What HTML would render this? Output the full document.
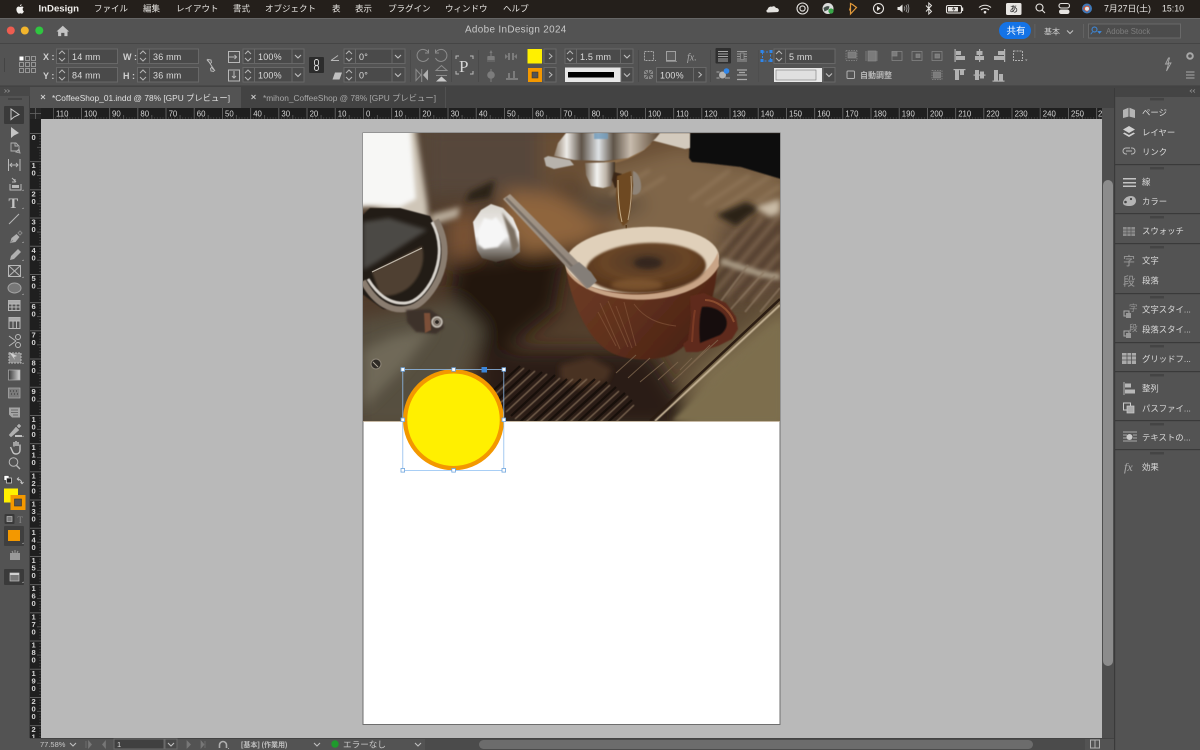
<!DOCTYPE html>
<html lang="ja"><head><meta charset="utf-8"><title>Adobe InDesign 2024</title>
<style>
html,body{margin:0;padding:0;background:#535353;width:1200px;height:750px;overflow:hidden}
svg{display:block;position:absolute;left:0;top:0}
text{font-family:"Liberation Sans","Noto Sans CJK JP",sans-serif}
.m{font-size:8.5px;fill:#e6e4e1}
.f{font-size:9px;fill:#dcdcdc;letter-spacing:.2px}
.l{font-size:9px;fill:#cfcfcf;font-weight:bold}
.p{font-size:8.4px;fill:#d8d8d8}
.r{font-size:7.8px;fill:#d4d4d4}
.v{font-size:7.6px;fill:#d6d6d6;font-weight:bold}
.box{fill:#4a4a4a;stroke:#686868;stroke-width:1}
.i{fill:none;stroke:#b8b8b8;stroke-width:1}
.d{fill:none;stroke:#8c8c8c;stroke-width:1}
.s{fill:#b8b8b8}
.g{fill:#8a8a8a}
.w{fill:none;stroke:#e6e4e1;stroke-width:1.1}
</style></head><body>
<svg width="1200" height="750" viewBox="0 0 1200 750" xmlns="http://www.w3.org/2000/svg">
<defs>
<symbol id="spin" viewBox="0 0 12 16" overflow="visible"><path d="M3 6l3-3 3 3M3 10l3 3 3-3" fill="none" stroke="#b5b5b5" stroke-width="1"/></symbol>
<symbol id="chev" viewBox="0 0 8 6" overflow="visible"><path d="M1 1.5l3 3 3-3" fill="none" stroke="#c0c0c0" stroke-width="1.1"/></symbol>
<pattern id="tx" patternUnits="userSpaceOnUse" x="363" y="108" width="28.2" height="11">
<rect width="28.2" height="11" fill="#1f1f1f"/><rect x="0" y="0" width=".8" height="11" fill="#6e6e6e"/><rect x="14.1" y="7" width=".7" height="4" fill="#666"/>
<rect x="2.8" y="9" width=".5" height="2" fill="#555"/><rect x="5.6" y="9" width=".5" height="2" fill="#555"/><rect x="8.5" y="9" width=".5" height="2" fill="#555"/><rect x="11.3" y="9" width=".5" height="2" fill="#555"/><rect x="16.9" y="9" width=".5" height="2" fill="#555"/><rect x="19.7" y="9" width=".5" height="2" fill="#555"/><rect x="22.6" y="9" width=".5" height="2" fill="#555"/><rect x="25.4" y="9" width=".5" height="2" fill="#555"/>
</pattern>
<pattern id="ty" patternUnits="userSpaceOnUse" x="30" y="133" width="11" height="28.2">
<rect width="11" height="28.2" fill="#1f1f1f"/><rect x="0" y="0" width="11" height=".8" fill="#6e6e6e"/><rect x="7" y="14.1" width="4" height=".7" fill="#666"/>
<rect x="9" y="2.8" width="2" height=".5" fill="#555"/><rect x="9" y="5.6" width="2" height=".5" fill="#555"/><rect x="9" y="8.5" width="2" height=".5" fill="#555"/><rect x="9" y="11.3" width="2" height=".5" fill="#555"/><rect x="9" y="16.9" width="2" height=".5" fill="#555"/><rect x="9" y="19.7" width="2" height=".5" fill="#555"/><rect x="9" y="22.6" width="2" height=".5" fill="#555"/><rect x="9" y="25.4" width="2" height=".5" fill="#555"/>
</pattern>
<clipPath id="ph"><rect x="363" y="133" width="417" height="288.5"/></clipPath>
<filter id="b8" x="-40%" y="-40%" width="180%" height="180%"><feGaussianBlur stdDeviation="9"/></filter>
<filter id="b6" x="-30%" y="-30%" width="160%" height="160%"><feGaussianBlur stdDeviation="6"/></filter>
<filter id="b3" x="-30%" y="-30%" width="160%" height="160%"><feGaussianBlur stdDeviation="3"/></filter>
<filter id="b2" x="-30%" y="-30%" width="160%" height="160%"><feGaussianBlur stdDeviation="2"/></filter>
<filter id="b1" x="-20%" y="-20%" width="140%" height="140%"><feGaussianBlur stdDeviation="1"/></filter>
<filter id="b05" x="-20%" y="-20%" width="140%" height="140%"><feGaussianBlur stdDeviation=".6"/></filter>
<linearGradient id="bg1" x1="0" y1="0" x2="1" y2="1"><stop offset="0" stop-color="#584838"/><stop offset=".45" stop-color="#4a3424"/><stop offset="1" stop-color="#6a5a40"/></linearGradient>
<radialGradient id="cof" cx=".5" cy=".35" r=".7"><stop offset="0" stop-color="#4f3826"/><stop offset=".5" stop-color="#694526"/><stop offset="1" stop-color="#4a2a14"/></radialGradient>
<linearGradient id="cup" x1="0" y1="0" x2="1" y2=".6"><stop offset="0" stop-color="#6e3e26"/><stop offset=".5" stop-color="#62321e"/><stop offset="1" stop-color="#4a2214"/></linearGradient>
<linearGradient id="chr" x1="0" y1="0" x2="1" y2="0"><stop offset="0" stop-color="#8c7c6a"/><stop offset=".12" stop-color="#eeece8"/><stop offset=".26" stop-color="#5e5348"/><stop offset=".42" stop-color="#dfe3e6"/><stop offset=".56" stop-color="#5f5448"/><stop offset=".72" stop-color="#c8bcae"/><stop offset="1" stop-color="#5a4632"/></linearGradient>
<linearGradient id="chs" x1="0" y1="0" x2="1" y2="0"><stop offset="0" stop-color="#7a6a58"/><stop offset=".4" stop-color="#f2f2f0"/><stop offset=".7" stop-color="#bdb4a8"/><stop offset="1" stop-color="#3c2c20"/></linearGradient>
<linearGradient id="wand" x1="0" y1="0" x2="1" y2="1"><stop offset="0" stop-color="#a89a8a"/><stop offset="1" stop-color="#8a8078"/></linearGradient>
<linearGradient id="knob" x1="0" y1="0" x2="0" y2="1"><stop offset="0" stop-color="#d8d4cc"/><stop offset=".55" stop-color="#f4f4f4"/><stop offset=".78" stop-color="#8f8a84"/><stop offset="1" stop-color="#4a4036"/></linearGradient>
</defs>

<!-- menu bar -->
<rect x="0" y="0" width="1200" height="18" fill="#241f1b"/>
<path d="M21.6 4.2c-.9.1-1.7.8-1.6 1.9.9 0 1.7-.9 1.6-1.9zM22.7 8.9c0-1 .8-1.4.9-1.5-.6-.8-1.4-.9-1.7-.9-.7 0-1.3.4-1.7.4s-.9-.4-1.5-.4c-.8 0-1.5.5-1.9 1.2-.8 1.4-.2 3.6.6 4.7.4.6.9 1.2 1.5 1.2.6 0 .8-.4 1.5-.4s.9.4 1.5.4c.6 0 1-.6 1.4-1.1.4-.6.6-1.2.6-1.2s-1.2-.5-1.2-2z" fill="#f2f0ee"/>
<text x="38.5" y="11.5" font-size="9.6" font-weight="bold" fill="#f0eeeb">InDesign</text>
<text x="94" y="11.5" class="m">ファイル</text>
<text x="143" y="11.5" class="m">編集</text>
<text x="176" y="11.5" class="m">レイアウト</text>
<text x="233" y="11.5" class="m">書式</text>
<text x="265" y="11.5" class="m">オブジェクト</text>
<text x="332" y="11.5" class="m">表</text>
<text x="355" y="11.5" class="m">表示</text>
<text x="388" y="11.5" class="m">プラグイン</text>
<text x="445" y="11.5" class="m">ウィンドウ</text>
<text x="503" y="11.5" class="m">ヘルプ</text>
<!-- status icons -->
<path d="M768 12.5c-1.8 0-2.2-2.6-.4-3 .3-2 2.4-3.4 4.4-2.6 1-1.2 3.4-.8 3.8 1 2.4 0 3.4 1.8 3 3-.3.7-.8 1.1-1.6 1.2z" fill="#e4e2df"/>
<circle cx="802.5" cy="8.5" r="5.5" class="w"/><circle cx="802.5" cy="8.5" r="2.6" class="w"/>
<circle cx="828" cy="8.5" r="5.5" fill="#dcdcdc"/><path d="M823.5 8c2-1.5 4-2.5 6-1.5l-1 3-4 2z" fill="#44504a"/><circle cx="831" cy="11" r="2.6" fill="#3aa84a"/>
<path d="M850.5 3.5v10.5l6-6.5-4-3zM850.5 7l-1 3.5" fill="none" stroke="#e39a3a" stroke-width="1.2"/>
<circle cx="878.5" cy="8.5" r="5" class="w"/><path d="M877 6v5l3.6-2.500z" fill="#e6e4e1"/>
<path d="M897.5 7h2l3-2.500v8l-3-2.500h-2z" fill="#e6e4e1"/><path d="M904.3 6.500c.7 1.300.7 2.700 0 4M906 5c1.200 2.200 1.200 4.800 0 7M907.800 4c1.400 2.800 1.400 6 0 9" fill="none" stroke="#aaa" stroke-width=".8"/>
<path d="M926 5.500l5.500 6-2.700 2.500v-11l2.700 2.500-5.500 6" fill="none" stroke="#e6e4e1" stroke-width="1"/>
<rect x="946.500" y="5.500" width="15" height="7.500" rx="1.500" class="w"/><rect x="948" y="7" width="10" height="4.500" fill="#e6e4e1"/><path d="M954 6l-2 3.500h2l-1.500 3 3-4h-2z" fill="#241f1b"/><rect x="962" y="7.500" width="1.200" height="3.500" fill="#e6e4e1"/>
<path d="M979 7.500c3.500-3 8.500-3 12 0M981 10c2.200-2 5.800-2 8 0" class="w"/><circle cx="985" cy="12.200" r="1.300" fill="#e6e4e1"/>
<rect x="1006" y="3" width="15.500" height="12" rx="1.500" fill="#e8e6e3"/><text x="1009.500" y="12.200" font-size="8.500" fill="#222">あ</text>
<circle cx="1039.500" cy="7.500" r="3.500" class="w"/><path d="M1042 10l3 3" class="w"/>
<rect x="1059" y="3.500" width="10.500" height="4.500" rx="2.200" class="w"/><rect x="1059" y="9.500" width="10.500" height="4.500" rx="2.200" fill="#e6e4e1"/>
<circle cx="1087" cy="8.500" r="5" fill="#3f78b8"/><path d="M1083 9c1-3 4-4 6-3l1 3-3 3z" fill="#d0583a"/><circle cx="1087" cy="8.800" r="2" fill="#dfe6ee"/>
<text x="1104" y="11.500" font-size="8.800" fill="#e6e4e1">7月27日(土)</text>
<text x="1162" y="11.500" font-size="8.800" fill="#e6e4e1">15:10</text>

<!-- title bar -->
<rect x="0" y="18" width="1200" height="25" fill="#535353"/>
<rect x="0" y="18" width="1200" height=".8" fill="#6a6a6a"/>
<circle cx="10.800" cy="30.500" r="4" fill="#ee5d50"/><circle cx="24.800" cy="30.500" r="4" fill="#f3b52c"/><circle cx="39.300" cy="30.500" r="4" fill="#2fc640"/>
<path d="M56.500 31.500l6.300-5.800 6.300 5.800h-1.600v4.600h-3.100v-3.200h-3.200v3.200h-3.100v-4.600z" fill="#c4c4c4"/>
<text x="465" y="32.500" font-size="9.900" fill="#c8c8c8" letter-spacing=".35">Adobe InDesign 2024</text>
<rect x="999" y="22" width="32" height="17" rx="8.500" fill="#1473e6"/><text x="1006.500" y="34" font-size="9.500" fill="#fff">共有</text>
<rect x="1034.500" y="24" width=".8" height="14" fill="#666"/>
<text x="1044" y="34.500" font-size="8" fill="#cfcfcf">基本</text><use href="#chev" x="1066" y="29" width="8" height="6"/>
<rect x="1083" y="24" width=".8" height="14" fill="#666"/>
<rect x="1088.500" y="24" width="92" height="14" fill="#4c4c4c" stroke="#696969"/>
<circle cx="1094.500" cy="29.500" r="2.500" fill="none" stroke="#3d8be0" stroke-width="1"/><path d="M1092.500 32l-1.800 2.200M1098 31.500l3 0-1.500 1.800z" stroke="#3d8be0" fill="#3d8be0" stroke-width=".8"/>
<text x="1106" y="33.800" font-size="7.800" fill="#7d7d7d">Adobe Stock</text>

<!-- control bar -->
<rect x="0" y="43" width="1200" height="1" fill="#454545"/>
<rect x="0" y="44" width="1200" height="42" fill="#535353"/>
<rect x="0" y="85.500" width="1200" height="1" fill="#3f3f3f"/>
<rect x="4" y="58" width="1" height="14" fill="#444"/>
<!-- ref point -->
<g fill="none" stroke="#a8a8a8" stroke-width=".8"><rect x="25.500" y="56.500" width="4" height="4"/><rect x="31.500" y="56.500" width="4" height="4"/><rect x="19.500" y="62.500" width="4" height="4"/><rect x="25.500" y="62.500" width="4" height="4"/><rect x="31.500" y="62.500" width="4" height="4"/><rect x="19.500" y="68.500" width="4" height="4"/><rect x="25.500" y="68.500" width="4" height="4"/><rect x="31.500" y="68.500" width="4" height="4"/></g>
<rect x="19.500" y="56.500" width="4" height="4" fill="#fff"/>
<text x="43" y="60" class="l">X :</text><text x="43" y="79" class="l">Y :</text>
<text x="123" y="60" class="l">W :</text><text x="123" y="79" class="l">H :</text>
<rect x="56.500" y="49" width="61" height="14.500" class="box"/><rect x="56.500" y="67.500" width="61" height="14.500" class="box"/>
<rect x="137.500" y="49" width="61" height="14.500" class="box"/><rect x="137.500" y="67.500" width="61" height="14.500" class="box"/>
<path d="M68.500 49v14.500M68.500 67.500v14.500M149.500 49v14.500M149.500 67.500v14.500" stroke="#686868"/>
<use href="#spin" x="56" y="48" width="12" height="16"/><use href="#spin" x="56" y="67" width="12" height="16"/><use href="#spin" x="137" y="48" width="12" height="16"/><use href="#spin" x="137" y="67" width="12" height="16"/>
<text x="72" y="60" class="f">14 mm</text><text x="72" y="78.500" class="f">84 mm</text><text x="153" y="60" class="f">36 mm</text><text x="153" y="78.500" class="f">36 mm</text>
<path d="M207 60l4 4m0 3l4 4M208 59.500l3 .5 .5 3M214 71.500l-3-.5-.5-3M207 59l8 12" class="i"/>
<!-- scale -->
<rect x="228.500" y="51.500" width="11" height="11" class="i"/><path d="M228.500 57h8m-2-2l2 2-2 2M239.500 53v8" class="i"/>
<rect x="228.500" y="70" width="11" height="11" class="i"/><path d="M234 71v7m-2-2l2 2 2-2" class="i"/>
<rect x="243" y="49" width="61" height="14.500" class="box"/><rect x="243" y="67.500" width="61" height="14.500" class="box"/>
<path d="M254.500 49v14.500M254.500 67.500v14.500M292 49v14.500M292 67.500v14.500" stroke="#686868"/>
<use href="#spin" x="242" y="48" width="12" height="16"/><use href="#spin" x="242" y="67" width="12" height="16"/>
<text x="258" y="60" class="f">100%</text><text x="258" y="78.500" class="f">100%</text>
<use href="#chev" x="294" y="53.500" width="8" height="6"/><use href="#chev" x="294" y="72" width="8" height="6"/>
<rect x="309" y="57" width="15" height="16" rx="1" fill="#2c2c2c"/><path d="M316.500 59.500a2 2 0 012 2v2a2 2 0 01-4 0v-2a2 2 0 012-2zM316.500 65.500a2 2 0 012 2v1a2 2 0 01-4 0v-1a2 2 0 012-2z" fill="none" stroke="#ddd" stroke-width=".9"/>
<!-- angle -->
<path d="M331 60.500h8M331 60.500l7-5" class="i"/><path d="M335 75.500h7l-2.500 7h-7z" transform="translate(0,-3)" fill="#c0c0c0"/>
<rect x="344" y="49" width="61" height="14.500" class="box"/><rect x="344" y="67.500" width="61" height="14.500" class="box"/>
<path d="M355.500 49v14.500M355.500 67.500v14.500M392 49v14.500M392 67.500v14.500" stroke="#686868"/>
<use href="#spin" x="343" y="48" width="12" height="16"/><use href="#spin" x="343" y="67" width="12" height="16"/>
<text x="359" y="60" class="f">0°</text><text x="359" y="78.500" class="f">0°</text>
<use href="#chev" x="394" y="53.500" width="8" height="6"/><use href="#chev" x="394" y="72" width="8" height="6"/>
<rect x="410" y="50" width=".8" height="32" fill="#484848"/>
<!-- rotate / flip -->
<path d="M428 52a6 6 0 10.500 6M428.500 49.500v3.500h-3.500" class="d"/><path d="M436 52a6 6 0 11-.5 6M435.500 49.500v3.500h3.500" class="d"/>
<path d="M416 69.500v11l5-5.500zM421.700 69v13" class="d"/><path d="M428 69.500v11l-5-5.500z" fill="#b0b0b0"/>
<path d="M436 71.500h11l-5.500-5z" class="d" transform="translate(0,-1)"/><path d="M436 75.500h11" stroke="#8c8c8c"/><path d="M436 81.500h11l-5.500-5z" fill="#c8c8c8"/>
<rect x="451" y="50" width=".8" height="32" fill="#484848"/>
<text x="459" y="72" font-size="17" fill="#d6d6d6" style='font-family:"Liberation Serif",serif'>P</text>
<path d="M456 59v-3h3M470 56h3v3M456 71v3h3M473 71v3h-3" class="i" stroke-width=".9"/>
<rect x="478" y="50" width=".8" height="32" fill="#484848"/>
<!-- text wrap-like greys -->
<g fill="#7c7c7c"><path d="M491 50l1.500 3h-1v3h3v4h-7v-4h3v-3h-1z"/><path d="M487 57h8v5h-8z" opacity=".4"/><path d="M505 54l3 2.500-3 2.500zM517 54l-3 2.500 3 2.500zM508 53h2v7h-2zM512 53h2v7h-2z"/><circle cx="491" cy="75" r="3.800"/><path d="M491 69v13" stroke="#7c7c7c"/><path d="M506 78h12v2h-12zM508 73h2v5h-2zM513 71h2v7h-2z"/></g>
<!-- swatches -->
<rect x="527.500" y="49" width="14.500" height="14.500" fill="#fff000"/>
<rect x="544" y="49" width="12" height="14.500" class="box"/><path d="M549 53.500l3 2.700-3 2.700" class="i"/>
<rect x="528" y="68" width="14" height="14" fill="#f39800"/><rect x="532" y="72" width="6" height="6" fill="#535353" stroke="#333" stroke-width=".5"/>
<rect x="544" y="67.500" width="12" height="14.500" class="box"/><path d="M549 72l3 2.700-3 2.700" class="i"/>
<!-- stroke -->
<rect x="565" y="49" width="68" height="14.500" class="box"/><path d="M576.500 49v14.500M620.500 49v14.500" stroke="#686868"/>
<use href="#spin" x="564" y="48" width="12" height="16"/><text x="580" y="60" class="f">1.5 mm</text><use href="#chev" x="623" y="53.500" width="8" height="6"/>
<rect x="565" y="67.500" width="55.500" height="14.500" fill="#e8e8e8"/><rect x="568" y="72" width="46" height="5.500" fill="#000"/>
<rect x="621" y="67.500" width="12" height="14.500" class="box"/><use href="#chev" x="623" y="72" width="8" height="6"/>
<rect x="638" y="50" width=".8" height="32" fill="#484848"/>
<!-- effects -->
<rect x="644.500" y="51.500" width="9" height="9" fill="none" stroke="#a8a8a8" stroke-dasharray="2 1"/><path d="M655 60.500h1" stroke="#a8a8a8"/>
<rect x="666.500" y="51.500" width="9" height="9" fill="#5d5d5d" stroke="#a0a0a0"/><path d="M666 61.500h11" stroke="#888"/>
<text x="687" y="60.500" font-size="10" font-style="italic" fill="#a8a8a8" style='font-family:"Liberation Serif",serif'>fx.</text>
<rect x="644" y="70" width="9" height="9" fill="#8a8a8a"/><path d="M644 70l9 9M653 70l-9 9M648.500 70v9M644 74.500h9" stroke="#555" stroke-width="1"/>
<rect x="656.500" y="67.500" width="49.500" height="14.500" class="box"/><path d="M693.500 67.500v14.500" stroke="#686868"/><text x="660" y="78.500" class="f">100%</text><path d="M698.500 72l3 2.700-3 2.700" class="i"/>
<rect x="710" y="50" width=".8" height="32" fill="#484848"/>
<!-- text wrap -->
<rect x="715.500" y="48" width="15.500" height="15.500" rx="1" fill="#2f2f2f"/>
<path d="M718 51.500h10M718 54h10M718 56.500h10M718 59h10M718 61h10" stroke="#cfcfcf" stroke-width=".8"/>
<path d="M737 51.500h10M737 61h10M737 54h3M744 54h3M737 56.500h3M744 56.500h3M737 59h3M744 59h3" stroke="#9a9a9a" stroke-width=".9"/><rect x="740.500" y="53" width="3.500" height="6.500" fill="none" stroke="#9a9a9a" stroke-width=".7"/>
<circle cx="722.500" cy="75" r="3.500" fill="#b4b4b4"/><circle cx="726.500" cy="71" r="2.800" fill="#2f86ea"/><path d="M716.500 72h3M716.500 78h3M725 78h5" stroke="#aaa"/>
<path d="M737 70h10M737 75h10M737 79.500h10M739 72.500h6" stroke="#a8a8a8" stroke-width="1.200"/>
<rect x="758" y="50" width=".8" height="32" fill="#484848" opacity=".5"/>
<!-- frame fit -->
<rect x="762.500" y="52" width="8" height="9" fill="none" stroke="#2f86ea" stroke-dasharray="2 1.500"/><g fill="#2f86ea"><rect x="760.500" y="50" width="3" height="3"/><rect x="769.500" y="50" width="3" height="3"/><rect x="760.500" y="59" width="3" height="3"/><rect x="769.500" y="59" width="3" height="3"/></g>
<rect x="774" y="49" width="61" height="14.500" class="box"/><path d="M785.500 49v14.500" stroke="#686868"/><use href="#spin" x="773" y="48" width="12" height="16"/><text x="789" y="60" class="f">5 mm</text>
<rect x="774" y="68" width="48" height="14" fill="#e8e8e8"/><rect x="776" y="70" width="40" height="10" fill="#e0e0e0" stroke="#777" stroke-width=".6"/>
<rect x="823" y="67.500" width="12" height="14.500" class="box"/><use href="#chev" x="825" y="72" width="8" height="6"/>
<!-- frame fitting -->
<g fill="#7b7b7b" stroke="#8a8a8a" stroke-width=".7">
<rect x="848" y="52" width="8" height="6"/><path d="M846 50.500h11M846 60.500h11M846 50.500v10M857 50.500v10" fill="none" stroke-dasharray="1.500 1"/>
<rect x="868" y="51" width="8" height="10"/><path d="M866 51v10M877 51v10" fill="none"/>
<rect x="892" y="51.500" width="10" height="9" fill="none"/><rect x="892" y="51.500" width="5" height="4.500"/>
<rect x="912" y="51.500" width="10" height="9" fill="none"/><rect x="916" y="54" width="4" height="3.500"/>
<rect x="932" y="51.500" width="10" height="9" fill="none"/><rect x="935" y="54" width="4.500" height="4"/>
<rect x="932" y="70.500" width="10" height="9" fill="none" stroke-dasharray="1.500 1"/><rect x="933.500" y="72" width="7" height="6"/>
</g>
<rect x="847" y="71" width="7.500" height="7.500" rx="1" fill="none" stroke="#b0b0b0"/>
<text x="860" y="78" font-size="8" fill="#b8b8b8" font-weight="bold">自動調整</text>
<!-- align -->
<g fill="#b2b2b2">
<rect x="954.500" y="49" width="1.200" height="13"/><rect x="956" y="51" width="5" height="4"/><rect x="956" y="56" width="9" height="4"/>
<rect x="979" y="49" width="1.200" height="13"/><rect x="976.500" y="51" width="6" height="4"/><rect x="975" y="56" width="9" height="4"/>
<rect x="1004" y="49" width="1.200" height="13"/><rect x="998" y="51" width="6" height="4"/><rect x="994" y="56" width="10" height="4"/>
<rect x="953.500" y="69" width="12" height="1.200"/><rect x="955" y="70" width="4" height="10"/><rect x="960" y="70" width="4" height="5"/>
<rect x="973.500" y="74.500" width="12" height="1.200"/><rect x="975" y="70" width="4" height="10"/><rect x="980" y="71.500" width="4" height="7"/>
<rect x="992.500" y="80.500" width="12" height="1.200"/><rect x="994" y="70" width="4" height="10.500"/><rect x="999" y="74" width="4" height="6.500"/>
</g>
<rect x="1013.500" y="51" width="9" height="9.500" fill="none" stroke="#b0b0b0" stroke-dasharray="2 1"/><path d="M1025 59.500h2.500l-1.200 1.500z" fill="#b0b0b0"/>
<path d="M1170 56l-3 6h3l-2 7 4.500-8h-3l1.500-5z" fill="none" stroke="#a8a8a8" stroke-width=".9" transform="translate(-1.500,2)"/>
<circle cx="1190" cy="56" r="2.800" fill="none" stroke="#a8a8a8" stroke-width="2"/>
<path d="M1186 72h8.500M1186 75h8.500M1186 78h8.500" stroke="#a8a8a8"/>

<!-- tab bar -->
<rect x="0" y="86" width="1200" height="22" fill="#434343"/>
<rect x="30" y="87" width="211" height="21" fill="#535353"/>
<rect x="445" y="87" width=".8" height="21" fill="#555"/>
<rect x="0" y="87" width="30" height="9" fill="#484848"/>
<path d="M4.500 89.500l2 1.500-2 1.500M7.500 89.500l2 1.500-2 1.500" fill="none" stroke="#999" stroke-width=".7"/>
<path d="M41 95l4 4M45 95l-4 4M251.500 95l4 4M255.500 95l-4 4" stroke="#d0d0d0" stroke-width=".9"/>
<text x="52" y="101" font-size="8.300" fill="#e0e0e0" textLength="178">*CoffeeShop_01.indd @ 78% [GPU プレビュー]</text>
<text x="263" y="101" font-size="8.300" fill="#a8a8a8" textLength="173">*mihon_CoffeeShop @ 78% [GPU プレビュー]</text>

<!-- canvas -->
<rect x="41" y="119" width="1061" height="619" fill="#b9b9b9"/>
<rect x="363" y="133" width="417" height="591.500" fill="#fff" stroke="#6e6e6e" stroke-width="1"/>

<!-- photo -->
<g clip-path="url(#ph)">
<rect x="363" y="133" width="417" height="289" fill="url(#bg1)"/>
<g filter="url(#b8)">
<rect x="425" y="125" width="130" height="70" fill="#56463a"/>
<path d="M540 125h160v40l-100 25-60-10z" fill="#6b4f36"/>
<path d="M590 175l90-25 110 20v60l-90 30-70-10-40-30z" fill="#80664a"/>
<path d="M505 190l70 5 50 25-40 25-60 10-25-30z" fill="#8f653c"/>
<path d="M560 195l60-5 30 15-50 20z" fill="#5a4a38"/>
<path d="M455 262l110-12-10 60-50 40-60 0z" fill="#241610"/>
<path d="M448 215l30-5 2 45-32 5z" fill="#7a5236"/>
<path d="M720 225l70-20v90l-70 10z" fill="#5e4a38"/>
<path d="M355 320l100-20 30 30-40 100h-90z" fill="#565040"/>
<path d="M480 350l170 0 50 80H470z" fill="#2a1c14"/>
<path d="M700 370l90-70v130h-110z" fill="#7f7050"/>
</g>
<path d="M560 365l30-8 22 12-5 12-25 8-22-10z" fill="#4a3022" filter="url(#b3)"/>
<path d="M363 350l30-14 40-8-30 40-30 30-10 10z" fill="#6f6958" filter="url(#b6)"/>
<path d="M495 180l-25 12-5 10 25-4z" fill="#2a2018" filter="url(#b3)"/>
<!-- white blown highlight -->
<path d="M355 125h60l12 78 2 20-18-1-22-10-18-6-16 2z" fill="#cfc6b8" filter="url(#b3)"/>
<path d="M355 125h55l6 74-16 8-20-2-25 0z" fill="#f7f7f5" filter="url(#b2)"/>
<path d="M430 215l30-8 -2 10-26 8z" fill="#b8ab9a" filter="url(#b3)"/>
<!-- right stripes blurred -->
<g stroke="#a3896c" stroke-width="3" opacity=".45" filter="url(#b2)" fill="none">
<path d="M690 285l60-70M702 290l60-72M714 293l66-78M726 297l54-62M740 300l40-46M752 302l28-32"/>
<path d="M705 205l45-30M720 210l50-34M736 216l44-30M690 200l40-30M610 195l40-25M625 202l40-25"/>
</g>
<g stroke="#3a2a1e" stroke-width="2" opacity=".4" filter="url(#b2)" fill="none">
<path d="M696 287l60-70M708 291l62-74M720 295l60-70M733 299l47-55M746 302l34-40"/>
</g>
<path d="M716 215l30-13 14 6-24 18z" fill="#2a2018" filter="url(#b3)"/>
<path d="M755 207l25-8v14l-10 4z" fill="#c9bba6" filter="url(#b3)"/>
<path d="M722 258l40 13 18 3v6l-20-3-40-13z" fill="#a89a84" filter="url(#b2)"/>
<g stroke="#8a7660" stroke-width="2" opacity=".7" filter="url(#b05)" fill="none"><path d="M718 305l30-40M730 310l34-38M745 312l30-36M760 312l20-24"/></g>
<!-- black top right -->
<path d="M690 133h91v46l-40-12-35-4-14-1-3-4z" fill="#100e0e" filter="url(#b05)"/>
<!-- group head -->
<path d="M650 133h40v15l-5 1-34-9z" fill="#d3cabd" filter="url(#b05)"/>
<path d="M650 143c-10 10-24 18-45 20" stroke="#8a6a46" stroke-width="3" fill="none" filter="url(#b05)"/>
<path d="M566 133l-8 10-4 13 20 4 30 1 24-3 16-8 12-12 4-5z" fill="url(#chr)" filter="url(#b05)"/>
<path d="M594 133h14v6h-14z" fill="#6f9bbd" filter="url(#b05)" opacity=".8"/>
<path d="M544 158l4-2 22 4 4 5-20 4-8-3z" fill="#b8b3ac" filter="url(#b05)"/>
<path d="M585 163l30-1 0 12-4 12-8 2-12-2-5-11z" fill="url(#chs)" filter="url(#b05)"/>
<path d="M614 172l8 2-2 12-5 2-3-8z" fill="#3a2818" filter="url(#b05)"/>
<!-- stream -->
<path d="M633 171c5 1 9 10 8 18-1 5-6 7-9 5l1-12z" fill="#8f8478" filter="url(#b05)"/>
<path d="M617 176l14-5 2 14-2 22-3 15-5 4-5-8-2-22z" fill="#6e4a24" filter="url(#b05)"/>
<path d="M618 180c0 14 1 30 4 42" stroke="#c8b08a" stroke-width="1" fill="none"/>
<path d="M631 176c1 14 0 30-3 44" stroke="#b8a080" stroke-width="1" fill="none"/>
<rect x="625.500" y="225" width="1.500" height="6" fill="#5a3a1a"/><circle cx="629" cy="237" r="2.800" fill="#7a3c1c" filter="url(#b05)"/>
<!-- knob -->
<path d="M473 222l8-12 10-6 12 4 10 10 6 14 1 20-8 6-16 4-14-4-5-8-2-14z" fill="url(#knob)" filter="url(#b05)"/>
<path d="M478 232l6-14 8 2 4-3 6 8 4 12-8 10-14 2-6-5z" fill="#f6f6f6" filter="url(#b1)"/>
<path d="M502 212l13 18 4 16-6 8-4-18z" fill="#7a6e60" filter="url(#b1)"/>
<!-- cup -->
<path d="M566 268c4 30 20 70 44 84 18 10 50 10 66 0 26-16 40-50 42-94z" fill="url(#cup)" filter="url(#b05)"/>
<g stroke="#84563c" stroke-width="1" opacity=".65" fill="none"><path d="M600 303l20 46M608 301l20 46M616 306l16 42M624 302l12 44M598 312l18 34M634 304c10 14 24 20 42 22"/></g>
<!-- handle -->
<path d="M690 296l14-3 22 10 10 14 2 12-6 10-14 7-20 6-12 0-3-8 5-4 3-22z" fill="#5e2c1a" filter="url(#b05)"/>
<path d="M702 307c-3 10-3 24-2 36l20-8c7-5 9-13 4-20-5-6-14-9-22-8z" fill="#16110d" filter="url(#b05)"/>
<path d="M705 300c10 0 24 8 29 22" stroke="#8a4c2e" stroke-width="2" fill="none"/>
<path d="M695 310c-2 10-2 20-3 32" stroke="#7a3a24" stroke-width="2" fill="none"/>
<ellipse cx="642" cy="260" rx="77" ry="33" transform="rotate(-3 642 260)" fill="#e0d0ba" filter="url(#b05)"/>
<path d="M566 266c14 36 130 44 152-14l1 14c-26 46-130 42-152 6z" fill="#c8a486" filter="url(#b05)"/>
<ellipse cx="646" cy="268" rx="60" ry="25" transform="rotate(-3 646 268)" fill="url(#cof)" filter="url(#b1)"/>
<ellipse cx="648" cy="263" rx="14" ry="6" fill="#2d221c" filter="url(#b2)" opacity=".8"/>
<ellipse cx="637" cy="285" rx="26" ry="6" fill="#8c6238" filter="url(#b2)" opacity=".6"/>
<!-- wand -->
<path d="M503 199l7-5 86 86-9 9z" fill="url(#wand)" filter="url(#b05)"/>
<path d="M506 198l84 87" stroke="#5e5650" stroke-width="2.500" opacity=".6" filter="url(#b05)"/>
<path d="M569 268l20 20 8-7-6-9-12-10z" fill="#847e78" filter="url(#b05)"/>
<!-- left ring -->
<path d="M355 222l15-14 30 0 30 8 12 24 0 30-15 25-22 16-22-2-28-20z" fill="#241d18" filter="url(#b05)"/>
<path d="M363 222l26-4 38 12 -50 32-14 8z" fill="#4c4844" filter="url(#b2)"/>
<path d="M372 272l50-26c4 16-2 32-14 42-8 6-20 10-28 6z" fill="#4f4030" filter="url(#b1)"/>
<path d="M372 272l50-24" stroke="#bdb5a8" stroke-width="1.200"/>
<path d="M436 220c10 18 12 38 2 60-8 16-20 28-32 29-14 2-30-4-43-28" fill="none" stroke="#8a7d70" stroke-width="6" filter="url(#b05)"/>
<path d="M432 222c9 16 10 36 1 56-7 14-17 24-27 25-12 1-26-4-38-24" fill="none" stroke="#d8d3cc" stroke-width="3" filter="url(#b05)"/>
<!-- valve -->
<path d="M406 310l24-1 12 9 2 10-8 6-20-2-9-10z" fill="#3d332b" filter="url(#b1)"/>
<circle cx="437" cy="322" r="5" fill="#857a70" stroke="#c8c2b8" stroke-width="1.500" filter="url(#b05)"/><circle cx="437" cy="322" r="1.800" fill="#2a2520"/>
<path d="M424 313l6 0 1 17-6 3z" fill="#7c5038" filter="url(#b05)"/>
<circle cx="376" cy="364" r="5" fill="#2f2b26" stroke="#8d8577"/><path d="M373 362l5 5" stroke="#b0a89a"/>
<!-- front grate -->
<g stroke="#140d08" stroke-width="2.200" opacity=".85" fill="none">
<path d="M484 399l36-33M493 404l37-34M502 409l40-37M511 416l44-41M520 422l47-43M534 422l47-43M548 422l47-43M563 422l44-40M578 422l38-35M593 422l32-29M608 422l24-22"/>
</g>
<g stroke="#8f7860" stroke-width="1.100" filter="url(#b05)" fill="none">
<path d="M488 401l36-33M497 406l38-35M506 412l41-38M515 419l45-41M526 422l47-43M540 422l47-43M555 422l45-41M570 422l40-37M585 422l34-31M600 422l28-26M616 422l18-17"/>
</g>
<g stroke="#80684f" stroke-width="1" opacity=".8" fill="none"><path d="M636 355l-20 18M650 358l-22 20M664 362l-24 20M678 362l-20 18M692 358l-12 12M680 375l30-30M672 382l46-42"/></g>
<!-- diagonal rail -->
<path d="M672 421l108-100v100z" fill="#7d6e4e" filter="url(#b2)"/>
<path d="M650 421l130-122" stroke="#2b1c12" stroke-width="2.500"/>
<path d="M655 421l125-116" stroke="#cdbb9d" stroke-width="1.800" filter="url(#b05)"/>
</g>
<rect x="363" y="421" width="417" height=".8" fill="#b9a88e"/>

<!-- selected circle -->
<circle cx="453.500" cy="419.800" r="48.400" fill="#fff000" stroke="#f39800" stroke-width="4.300"/>
<rect x="402.800" y="369.500" width="101" height="101" fill="none" stroke="#8fbcec" stroke-width=".8"/>
<path d="M403 470.500h101" stroke="#a8cef5" stroke-width="1.100"/>
<g fill="#fff" stroke="#6ea4dd" stroke-width=".8">
<rect x="401" y="367.700" width="3.600" height="3.600"/><rect x="451.800" y="367.700" width="3.600" height="3.600"/><rect x="502" y="367.700" width="3.600" height="3.600"/>
<rect x="401" y="418" width="3.600" height="3.600"/><rect x="502" y="418" width="3.600" height="3.600"/>
<rect x="401" y="468.500" width="3.600" height="3.600"/><rect x="451.800" y="468.500" width="3.600" height="3.600"/><rect x="502" y="468.500" width="3.600" height="3.600"/>
</g>
<rect x="481.500" y="367" width="5.500" height="5.500" fill="#3b85d8"/>

<!-- rulers -->
<rect x="30" y="108" width="1072" height="11" fill="url(#tx)"/>
<rect x="30" y="119" width="11" height="619" fill="url(#ty)"/>
<rect x="30" y="108" width="11" height="11" fill="#262626"/><path d="M30 113.500h11M35.500 108v11" stroke="#6a6a6a" stroke-width=".7"/>
<rect x="30" y="119" width="11" height="14" fill="#1f1f1f"/>
<rect x="41" y="108" width="12" height="11" fill="#1f1f1f"/>
<text class="r" x="56" y="116.500">110</text><text class="r" x="84" y="116.500">100</text><text class="r" x="112" y="116.500">90</text><text class="r" x="140.400" y="116.500">80</text><text class="r" x="168.600" y="116.500">70</text><text class="r" x="196.800" y="116.500">60</text><text class="r" x="225" y="116.500">50</text><text class="r" x="253.200" y="116.500">40</text><text class="r" x="281.400" y="116.500">30</text><text class="r" x="309.600" y="116.500">20</text><text class="r" x="337.800" y="116.500">10</text><text class="r" x="366" y="116.500">0</text><text class="r" x="394.200" y="116.500">10</text><text class="r" x="422.400" y="116.500">20</text><text class="r" x="450.600" y="116.500">30</text><text class="r" x="478.800" y="116.500">40</text><text class="r" x="507" y="116.500">50</text><text class="r" x="535.200" y="116.500">60</text><text class="r" x="563.400" y="116.500">70</text><text class="r" x="591.600" y="116.500">80</text><text class="r" x="619.800" y="116.500">90</text><text class="r" x="648" y="116.500">100</text><text class="r" x="676.200" y="116.500">110</text><text class="r" x="704.400" y="116.500">120</text><text class="r" x="732.600" y="116.500">130</text><text class="r" x="760.800" y="116.500">140</text><text class="r" x="789" y="116.500">150</text><text class="r" x="817.200" y="116.500">160</text><text class="r" x="845.400" y="116.500">170</text><text class="r" x="873.600" y="116.500">180</text><text class="r" x="901.800" y="116.500">190</text><text class="r" x="930" y="116.500">200</text><text class="r" x="958.200" y="116.500">210</text><text class="r" x="986.400" y="116.500">220</text><text class="r" x="1014.600" y="116.500">230</text><text class="r" x="1042.800" y="116.500">240</text><text class="r" x="1071" y="116.500">250</text><text class="r" x="1098" y="116.500">20</text>
<text class="v" x="31.500" y="140">0</text>
<text class="v" x="31.500 31.500" y="168 175.500">10</text>
<text class="v" x="31.500 31.500" y="196.400 203.900">20</text>
<text class="v" x="31.500 31.500" y="224.600 232.100">30</text>
<text class="v" x="31.500 31.500" y="252.800 260.300">40</text>
<text class="v" x="31.500 31.500" y="281 288.500">50</text>
<text class="v" x="31.500 31.500" y="309.200 316.700">60</text>
<text class="v" x="31.500 31.500" y="337.400 344.900">70</text>
<text class="v" x="31.500 31.500" y="365.600 373.100">80</text>
<text class="v" x="31.500 31.500" y="393.800 401.300">90</text>
<text class="v" x="31.500 31.500 31.500" y="422 429.500 437">100</text>
<text class="v" x="31.500 31.500 31.500" y="450.200 457.700 465.200">110</text>
<text class="v" x="31.500 31.500 31.500" y="478.400 485.900 493.400">120</text>
<text class="v" x="31.500 31.500 31.500" y="506.600 514.100 521.600">130</text>
<text class="v" x="31.500 31.500 31.500" y="534.800 542.300 549.800">140</text>
<text class="v" x="31.500 31.500 31.500" y="563 570.500 578">150</text>
<text class="v" x="31.500 31.500 31.500" y="591.200 598.700 606.200">160</text>
<text class="v" x="31.500 31.500 31.500" y="619.400 626.900 634.400">170</text>
<text class="v" x="31.500 31.500 31.500" y="647.600 655.100 662.600">180</text>
<text class="v" x="31.500 31.500 31.500" y="675.800 683.300 690.800">190</text>
<text class="v" x="31.500 31.500 31.500" y="704 711.500 719">200</text>
<text class="v" x="31.500 31.500" y="732.200 739.700">21</text>

<!-- left toolbar -->
<rect x="0" y="96" width="30" height="654" fill="#535353"/>
<rect x="29" y="96" width="1" height="654" fill="#414141"/>
<rect x="8" y="98" width="14" height="2" fill="#444"/>
<rect x="4" y="106" width="20" height="18" rx="1" fill="#3a3a3a"/>
<path d="M11 109v10.500l3-2.500 5 -2.500z" fill="none" stroke="#c8c8c8" stroke-width="1"/>
<path d="M11 127v11l3-2.500 5-2.500z" fill="#c4c4c4"/>
<path d="M11 143h5l3 3v5h-8zM15 143v3h3M16 152l3-3 1 4z" fill="none" stroke="#b0b0b0" stroke-width=".9"/>
<path d="M8.500 159v12M20 159v12M10 165h8M12 163l-2 2 2 2M16 163l2 2-2 2" class="i"/>
<path d="M10 184v6h11v-6M12 178l4 4M15 179v3h-3" class="i"/><rect x="12" y="185" width="7" height="3" fill="#b8b8b8"/><path d="M22 191h1.500v-1.500z" fill="#bbb"/>
<text x="8.500" y="208" font-size="14.500" font-weight="bold" fill="#c4c4c4" style='font-family:"Liberation Serif",serif'>T</text><path d="M22 209h1.500v-1.500z" fill="#bbb"/>
<path d="M9 224l10-10" stroke="#b8b8b8"/>
<path d="M10 243l1.500-5 5-4 3 3-4 5z" fill="#b0b0b0"/><path d="M18 233l2-2 2 2-2 2zM10 243l3-3" stroke="#888" fill="none"/><path d="M22 243h1.500v-1.500z" fill="#bbb"/>
<path d="M10 260l1-4 7-7 3 3-7 7z" fill="#b0b0b0"/><path d="M22 261h1.500v-1.500z" fill="#bbb"/>
<rect x="8.500" y="265.500" width="12" height="11" class="i"/><path d="M8.500 265.500l12 11M20.500 265.500l-12 11" class="i"/><path d="M22 278h1.500v-1.500z" fill="#bbb"/>
<ellipse cx="14.500" cy="288" rx="6.500" ry="5" fill="#777" stroke="#a4a4a4"/><path d="M22 295h1.500v-1.500z" fill="#bbb"/>
<path d="M8.500 300.500h11.500v10h-11.500zM8.500 304h11.500M8.500 307h11.500M12 304v6M16 304v6" class="i"/><rect x="8.500" y="300.500" width="11.500" height="3" fill="#aaa"/>
<path d="M9 317.500h11v11h-11zM13 317.500v11M16.500 317.500v11M9 321h11" class="i"/><rect x="9" y="317.500" width="11" height="3" fill="#aaa"/>
<circle cx="18" cy="337" r="2.500" class="i"/><circle cx="18" cy="345" r="2.500" class="i"/><path d="M9 336l7 5M9 346l7-5" class="i"/>
<rect x="9" y="353" width="12" height="10" fill="#8a8a8a" stroke="#b8b8b8" stroke-dasharray="2 1"/><path d="M9 352l6 8-1-3 3-1z" fill="#d0d0d0"/><path d="M22 364h1.500v-1.500z" fill="#bbb"/>
<defs><linearGradient id="gt" x1="0" y1="0" x2="1" y2="0"><stop offset="0" stop-color="#3a3a3a"/><stop offset="1" stop-color="#d8d8d8"/></linearGradient></defs>
<rect x="8.500" y="370" width="11.500" height="10" fill="url(#gt)" stroke="#b0b0b0" stroke-width=".7"/>
<rect x="8.500" y="388" width="11.500" height="10" fill="#7a7a7a" stroke="#b0b0b0" stroke-width=".7"/><path d="M10 391h1M13 391h1M16 391h1M11 394h1M14 394h1M17 394h1" stroke="#333"/>
<path d="M9 407.500h11v10h-8l-3-3z" fill="#a4a4a4"/><path d="M11 410h7M11 412.500h7M13 415h5" stroke="#555" stroke-width=".8"/>
<path d="M9 435l7-8 3 3-8 7zM17 426l2-2 2 2-2 2z" fill="#b0b0b0" stroke="#aaa" stroke-width=".5"/><path d="M15 436h7" stroke="#c0c0c0" stroke-width="2"/><path d="M22 437h1.500v-1.500z" fill="#bbb"/>
<path d="M10.500 447l2 4.500c.5 1.500 2 2.500 3.500 2.500 2.500 0 4-1.500 4-4v-5.500m-6 2v-4.500m2 4v-5m2 5v-4" fill="none" stroke="#c4c4c4" stroke-width="1.400"/>
<circle cx="13.500" cy="462" r="4.300" class="i"/><path d="M16.500 465.500l3.500 3.500" stroke="#b8b8b8" stroke-width="1.400"/>
<rect x="4" y="475.500" width="5" height="5" fill="#fff" stroke="#333" stroke-width=".6"/><rect x="6.500" y="478" width="5" height="5" fill="#222" stroke="#ddd" stroke-width=".7"/>
<path d="M17 479c3 0 5 2 5 5M17 479l2-1.500M17 479l2 1.500M22 484l-1.500-2M22 484l1.500-2" fill="none" stroke="#c0c0c0" stroke-width=".9"/>
<rect x="4" y="488.500" width="14" height="14" fill="#fff000"/>
<rect x="10.500" y="495" width="15" height="15" fill="#f39800"/><rect x="14.500" y="499" width="7" height="7" fill="#535353" stroke="#333" stroke-width=".6"/>
<rect x="4.500" y="514" width="10" height="10" rx="1" fill="#3a3a3a"/><rect x="7" y="516.500" width="5" height="5" fill="#777" stroke="#bbb" stroke-width=".7"/>
<text x="17.500" y="523" font-size="9" fill="#888" style='font-family:"Liberation Serif",serif'>T</text>
<rect x="4" y="526" width="20" height="20" rx="1" fill="#3f3f3f"/><rect x="8" y="530" width="12" height="11" fill="#f39800"/><path d="M22 544h1.500v-1.500z" fill="#bbb"/>
<rect x="10" y="553" width="10" height="7" fill="#999"/><path d="M12 551l1 2M15 550v3M18 551l-1 2" stroke="#999"/>
<rect x="4" y="569" width="20" height="16" rx="1" fill="#3a3a3a"/><rect x="10" y="573" width="9" height="8" fill="#777" stroke="#c0c0c0" stroke-width=".7"/><rect x="10" y="573" width="9" height="2" fill="#d0d0d0"/><path d="M22 583h1.500v-1.500z" fill="#bbb"/>

<!-- scrollbar -->
<rect x="1102" y="108" width="12" height="630" fill="#4e4e4e"/>
<rect x="1103" y="180" width="10" height="486" rx="5" fill="#8c8c8c"/>

<!-- right panel -->
<rect x="1114" y="88" width="86" height="662" fill="#535353"/>
<rect x="1114" y="88" width="1.200" height="662" fill="#3a3a3a"/>
<rect x="1115" y="88" width="85" height="9" fill="#444"/>
<path d="M1195 89.500l-2 1.500 2 1.500M1192 89.500l-2 1.500 2 1.500" fill="none" stroke="#999" stroke-width=".7"/>
<g fill="#3a3a3a"><rect x="1115" y="164" width="85" height="1.200"/><rect x="1115" y="213" width="85" height="1.200"/><rect x="1115" y="243" width="85" height="1.200"/><rect x="1115" y="293" width="85" height="1.200"/><rect x="1115" y="342" width="85" height="1.200"/><rect x="1115" y="371" width="85" height="1.200"/><rect x="1115" y="420" width="85" height="1.200"/><rect x="1115" y="449" width="85" height="1.200"/></g>
<g fill="#444"><rect x="1150" y="98" width="14" height="2.500"/><rect x="1150" y="167" width="14" height="2.500"/><rect x="1150" y="216" width="14" height="2.500"/><rect x="1150" y="246" width="14" height="2.500"/><rect x="1150" y="296" width="14" height="2.500"/><rect x="1150" y="345" width="14" height="2.500"/><rect x="1150" y="374" width="14" height="2.500"/><rect x="1150" y="423" width="14" height="2.500"/><rect x="1150" y="452" width="14" height="2.500"/></g>
<path d="M1123 110l6-2.500 6 2.500v8l-6-1.500-6 1.500z" fill="#b4b4b4"/><path d="M1129 107v11" stroke="#535353"/>
<path d="M1123 129.500l6-3.500 6 3.500-6 3.500z" fill="#d0d0d0"/><path d="M1123 133.500l6 3.500 6-3.500-1.500-1-4.500 2.500-4.500-2.500z" fill="#d0d0d0"/>
<path d="M1127 154h-1a3 3 0 010-6h4M1131 154h1a3 3 0 000-6h-1M1126 151h6" fill="none" stroke="#b8b8b8" stroke-width="1"/>
<rect x="1123" y="178" width="13" height="1.500" fill="#c4c4c4"/><rect x="1123" y="182" width="13" height="1.500" fill="#c4c4c4"/><rect x="1123" y="185.500" width="13" height="1.500" fill="#c4c4c4"/>
<path d="M1123 203c0-4 4-7 8-7 3 0 5 2 5 5 0 3-3 5-6 5-2 0-7 0-7-3z" fill="#b4b4b4"/><circle cx="1125.500" cy="202" r="1.300" fill="#444"/><circle cx="1131" cy="199" r="1.100" fill="#444"/>
<rect x="1123" y="227" width="12" height="9" fill="#8c8c8c"/><path d="M1127 227v9M1131 227v9M1123 230h12M1123 233h12" stroke="#535353" stroke-width=".7"/>
<text x="1123" y="265" font-size="12" fill="#999">字</text>
<text x="1123" y="285.500" font-size="12" fill="#999">段</text>
<rect x="1124" y="311" width="5" height="5" fill="none" stroke="#aaa"/><rect x="1126" y="313" width="5" height="5" fill="#999"/><text x="1129" y="311" font-size="8.500" fill="#999">字</text>
<rect x="1124" y="331" width="5" height="5" fill="none" stroke="#aaa"/><rect x="1126" y="333" width="5" height="5" fill="#999"/><text x="1129" y="331" font-size="8.500" fill="#999">段</text>
<rect x="1122" y="353" width="14" height="11" fill="#aaa"/><path d="M1122 356h14M1122 360h14M1127 353v11M1131.500 353v11" stroke="#535353" stroke-width=".8"/>
<rect x="1123.500" y="382" width="1" height="13" fill="#b0b0b0"/><rect x="1125" y="383.500" width="6" height="4" fill="#b8b8b8"/><rect x="1125" y="389.500" width="10" height="4" fill="#b8b8b8"/>
<rect x="1123.500" y="403" width="7" height="7" fill="none" stroke="#ccc"/><rect x="1127" y="406" width="7" height="7" fill="#aaa" stroke="#ccc" stroke-width=".7"/>
<path d="M1123 432h14M1123 435h4M1133 435h4M1123 438h4M1133 438h4M1123 441h14" stroke="#aaa"/><circle cx="1129.500" cy="437" r="3" fill="#ccc"/>
<text x="1124" y="471" font-size="12" font-style="italic" fill="#aaa" style='font-family:"Liberation Serif",serif'>fx</text>
<text x="1142" y="115.500" class="p">ページ</text>
<text x="1142" y="135.500" class="p">レイヤー</text>
<text x="1142" y="155" class="p">リンク</text>
<text x="1142" y="185" class="p">線</text>
<text x="1142" y="204.500" class="p">カラー</text>
<text x="1142" y="234" class="p">スウォッチ</text>
<text x="1142" y="263.500" class="p">文字</text>
<text x="1142" y="283.500" class="p">段落</text>
<text x="1142" y="312.500" class="p">文字スタイ...</text>
<text x="1142" y="332.500" class="p">段落スタイ...</text>
<text x="1142" y="362" class="p">グリッドフ...</text>
<text x="1142" y="391.500" class="p">整列</text>
<text x="1142" y="411.500" class="p">パスファイ...</text>
<text x="1142" y="440.500" class="p">テキストの...</text>
<text x="1142" y="470" class="p">効果</text>

<!-- status bar -->
<rect x="0" y="738" width="1114" height="12" fill="#535353"/>
<rect x="30" y="738" width="1084" height=".8" fill="#3f3f3f"/>
<text x="40" y="746.800" font-size="7.500" fill="#c8c8c8">77.58%</text>
<use href="#chev" x="69" y="741.500" width="8" height="6"/>
<path d="M86 741v7M88.500 741v7l3-3.500zM105.500 741v7l-3-3.500z" fill="#777" stroke="#777" stroke-width=".7"/>
<rect x="114" y="739" width="50" height="10" fill="#404040" stroke="#6a6a6a"/>
<rect x="165" y="739" width="12" height="10" fill="#484848" stroke="#6a6a6a"/><use href="#chev" x="167" y="741.500" width="8" height="6"/>
<text x="117" y="746.800" font-size="7.500" fill="#dcdcdc">1</text>
<path d="M187 741v7l3.500-3.500zM201 741v7l3-3.500zM205 741v7" fill="#777" stroke="#777" stroke-width=".7"/>
<path d="M219.500 748v-3a3.500 3.500 0 017 0v3" fill="none" stroke="#b0b0b0" stroke-width="1.600"/><path d="M228 748.500h1" stroke="#aaa"/>
<text x="241" y="746.800" font-size="7" fill="#bdbdbd" font-weight="bold">[基本] (作業用)</text>
<use href="#chev" x="313" y="741.500" width="8" height="6"/>
<circle cx="335" cy="744" r="3.700" fill="#1f9a2c"/>
<text x="343" y="747.500" font-size="8.600" fill="#c8c8c8">エラーなし</text>
<use href="#chev" x="414" y="741.500" width="8" height="6"/>
<rect x="425" y="739" width="660" height="11" fill="#4b4b4b"/>
<rect x="479" y="740" width="554" height="9" rx="4.500" fill="#6c6c6c"/>
<rect x="1090.500" y="740" width="9" height="8" fill="none" stroke="#b0b0b0"/><path d="M1095 740v8" stroke="#b0b0b0"/>
</svg>
</body></html>
